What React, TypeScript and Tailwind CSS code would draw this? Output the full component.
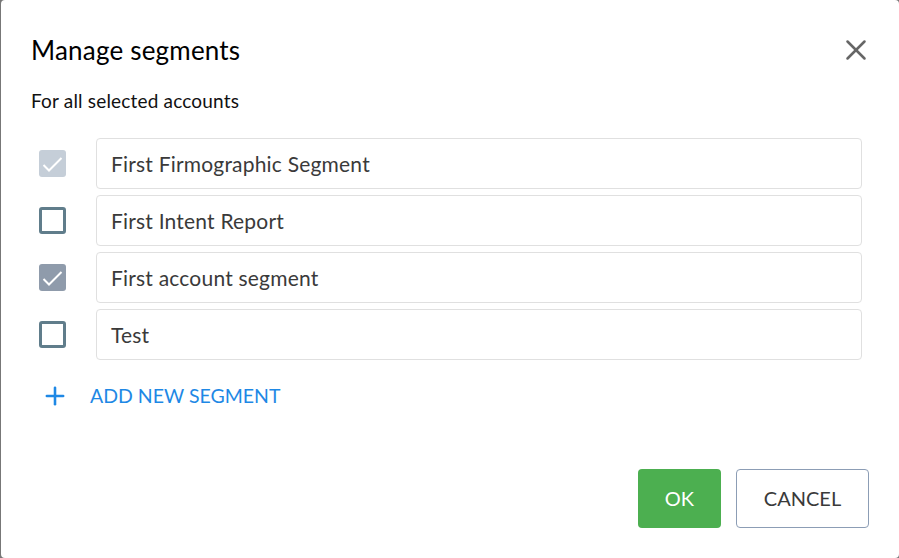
import { Plus, X } from "lucide-react";

const segments = [
  { name: "First Firmographic Segment", state: "disabled" },
  { name: "First Intent Report", state: "empty" },
  { name: "First account segment", state: "checked" },
  { name: "Test", state: "empty" },
];

const CheckMark = () => (
  <svg viewBox="0 0 27 27" className="h-[27px] w-[27px]" fill="none">
    <path d="M4.5 15 L10 20.5 L22.5 8" stroke="#fff" strokeWidth="2" />
  </svg>
);

const Box = ({ state }: { state: string }) => {
  if (state === "empty") {
    return <div className="h-[27px] w-[27px] rounded-[3px] border-[3px] border-[#607d8b] bg-white" />;
  }
  return (
    <div className={`h-[27px] w-[27px] rounded-[3px] ${state === "disabled" ? "bg-[#c5ced8]" : "bg-[#8f9bab]"}`}>
      <CheckMark />
    </div>
  );
};

export default function App() {
  return (
    <div className="h-[558px] w-[899px] bg-[#777777] pl-[1px]">
      <div className="flex h-full flex-col rounded-[4px] bg-white pl-[30px] pr-[30px] pt-[34px] font-['Lato',sans-serif]">
        <div className="flex h-[32px] items-center justify-between">
          <h1 className="text-[26px] leading-[32px] tracking-[0.2px] text-black">Manage segments</h1>
          <X className="mr-[-4px] h-[34px] w-[34px] text-[#666666]" strokeWidth={1.8} />
        </div>
        <p className="mt-[23px] text-[19px] leading-[24px] tracking-[0.18px] text-[#111111]">For all selected accounts</p>
        <div className="mt-[25px] flex flex-col gap-[6px]">
          {segments.map((s) => (
            <div key={s.name} className="flex items-center">
              <div className="ml-[8px] mr-[30px]">
                <Box state={s.state} />
              </div>
              <div className="flex h-[51px] w-[766px] items-center rounded-[4px] border border-[#e0e0e0] pl-[14px] text-[21px] tracking-[0.2px] text-[#3a3a3a]">
                {s.name}
              </div>
            </div>
          ))}
        </div>
        <div className="mt-[21px] flex h-[30px] items-center text-[#1e88e5]">
          <Plus className="ml-[10px] h-[28px] w-[28px]" strokeWidth={2.2} />
          <span className="ml-[21px] text-[19.5px] leading-[30px]">ADD NEW SEGMENT</span>
        </div>
        <div className="mt-[58px] flex justify-end gap-[15px]">
          <button className="h-[59px] w-[83px] rounded-[4px] bg-[#4caf50] pb-[1px] text-[20px] text-white">OK</button>
          <button className="h-[59px] w-[133px] rounded-[4px] border border-[#8c9db5] bg-white pb-[1px] text-[20px] text-[#3a3a3a]">CANCEL</button>
        </div>
      </div>
    </div>
  );
}
